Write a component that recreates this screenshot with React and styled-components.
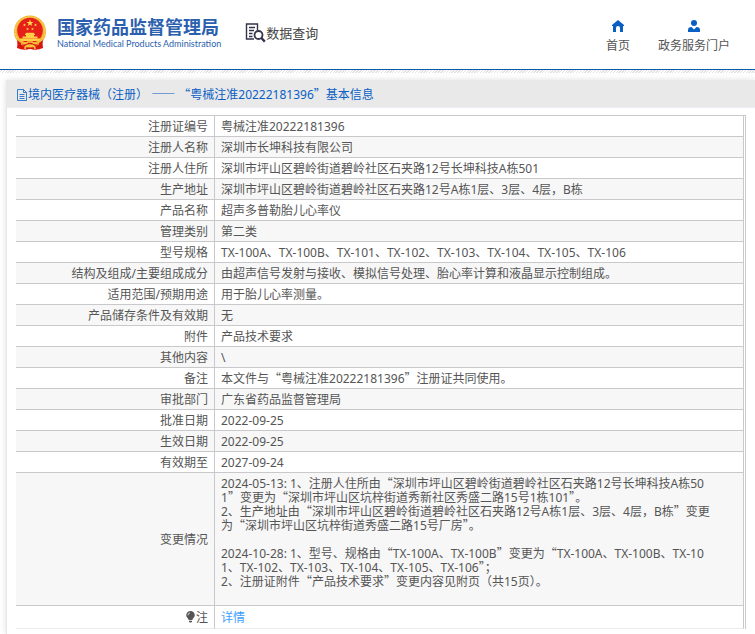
import styled, { createGlobalStyle } from 'styled-components'

const GlobalStyle = createGlobalStyle`
  * {
    box-sizing: border-box;
  }

  body {
    margin: 0;
    background: #fff;
    color: #555;
    font-family: 'Noto Sans', 'Noto Sans CJK SC', sans-serif;
    font-size: 12px;
    line-height: 14px;
  }
`

const Header = styled.header`
  display: flex;
  align-items: center;
  height: 70px;
  padding: 0 25px 4px 13px;
  border-bottom: 1px solid #0a5bab;
`

const Hatch = styled.div`
  height: 3px;
  margin-bottom: 7px;
  background: repeating-linear-gradient(135deg, #fff 0 1px, #e2e2e2 1px 2px);
`

const Logo = styled.a`
  display: flex;
  align-items: center;
  gap: 10px;
  color: #2c5fae;
  text-decoration: none;
`

const LogoText = styled.span`
  display: flex;
  flex-direction: column;
  white-space: nowrap;
`

const LogoName = styled.strong`
  font-family: 'Noto Sans CJK SC', sans-serif;
  font-size: 18px;
  font-weight: 700;
  line-height: 22px;
`

const LogoEnglish = styled.span`
  font-family: Lato, sans-serif;
  font-size: 9px;
  line-height: 14px;
`

const Search = styled.a`
  display: flex;
  align-items: center;
  margin-left: 24px;
  color: #444;
  font-size: 13px;
  line-height: 20px;
  text-decoration: none;
`

const Nav = styled.nav`
  display: flex;
  gap: 28px;
  margin-left: auto;
`

const NavLink = styled.a`
  display: flex;
  flex-direction: column;
  align-items: center;
  gap: 7px;
  padding-top: 8px;
  color: #555;
  text-decoration: none;

  svg {
    fill: #0a5fc4;
  }
`

const Panel = styled.main`
  margin-left: 6px;
  padding-bottom: 5px;
  border-left: 1px solid #e8e8e8;
  box-shadow: 0 0 6px #ddd;
`

const PanelTitle = styled.h1`
  display: flex;
  align-items: center;
  height: 28px;
  margin: 0 0 7px -1px;
  padding: 2px 0 0 11px;
  border-bottom: 1px solid #ededf5;
  background: #e9e9e9;
  color: #0a5fc4;
  font-size: 12px;
  font-weight: 400;
`

const TableArea = styled.div`
  padding: 0 9px;
`

const Table = styled.table`
  width: 100%;
  padding-right: 1px;
  border-top: 1px solid #c9c9cb;
  border-right: 1px solid #c9c9cf;
  border-spacing: 0;
`

const Row = styled.tr`
  height: ${({ $tall }) => ($tall ? '23px' : '21px')};
  background: ${({ $striped }) => ($striped ? '#f7f7f7' : '#fff')};
`

const Label = styled.th`
  width: 199px;
  padding: 4px 6px 2px;
  border-right: 1px solid #c9c9cb;
  border-bottom: 1px solid ${({ $last }) => ($last ? '#ebebf0' : '#c9c9cb')};
  font-weight: 400;
  text-align: right;

  svg {
    vertical-align: -1px;
  }
`

const Value = styled.td`
  padding: 4px 6px 2px;
  border-right: 1px solid #c9c9cb;
  border-bottom: 1px solid ${({ $last }) => ($last ? '#ebebf0' : '#c9c9cb')};
  white-space: pre-line;
`

const DetailLink = styled.a`
  color: #409eff;
  text-decoration: none;
`

const Quote = styled.span`
  font-family: 'Noto Sans CJK SC', sans-serif;
  line-height: 0;
`

// Chinese quotation marks take a full character width
function Text({ children }) {
  return children
    .split(/([“”—]+)/)
    .map((part, i) => (i % 2 ? <Quote key={i}>{part}</Quote> : part))
}

const changes = `2024-05-13: 1、注册人住所由“深圳市坪山区碧岭街道碧岭社区石夹路12号长坤科技A栋50
1”变更为“深圳市坪山区坑梓街道秀新社区秀盛二路15号1栋101”。
2、生产地址由“深圳市坪山区碧岭街道碧岭社区石夹路12号A栋1层、3层、4层，B栋”变更
为“深圳市坪山区坑梓街道秀盛二路15号厂房”。

2024-10-28: 1、型号、规格由“TX-100A、TX-100B”变更为“TX-100A、TX-100B、TX-10
1、TX-102、TX-103、TX-104、TX-105、TX-106”；
2、注册证附件“产品技术要求”变更内容见附页（共15页）。
\u00a0`

const rows = [
  ['注册证编号', '粤械注准20222181396'],
  ['注册人名称', '深圳市长坤科技有限公司'],
  ['注册人住所', '深圳市坪山区碧岭街道碧岭社区石夹路12号长坤科技A栋501'],
  ['生产地址', '深圳市坪山区碧岭街道碧岭社区石夹路12号A栋1层、3层、4层，B栋'],
  ['产品名称', '超声多普勒胎儿心率仪'],
  ['管理类别', '第二类'],
  ['型号规格', 'TX-100A、TX-100B、TX-101、TX-102、TX-103、TX-104、TX-105、TX-106'],
  ['结构及组成/主要组成成分', '由超声信号发射与接收、模拟信号处理、胎心率计算和液晶显示控制组成。'],
  ['适用范围/预期用途', '用于胎儿心率测量。'],
  ['产品储存条件及有效期', '无'],
  ['附件', '产品技术要求'],
  ['其他内容', '\\'],
  ['备注', '本文件与“粤械注准20222181396”注册证共同使用。'],
  ['审批部门', '广东省药品监督管理局'],
  ['批准日期', '2022-09-25'],
  ['生效日期', '2022-09-25'],
  ['有效期至', '2027-09-24'],
  ['变更情况', changes],
]

function Emblem() {
  return (
    <svg width="34" height="36" viewBox="0 0 34 36" aria-hidden="true">
      <path d="M5 24 L4 33 Q10 36 17 34 Q24 36 30 33 L29 24Z" fill="#d9150f" />
      <circle cx="17" cy="16.5" r="16" fill="#f2b632" />
      <circle cx="17" cy="16.5" r="14.6" fill="none" stroke="#fbd965" strokeWidth="1" strokeDasharray="2 1" />
      <circle cx="17" cy="15.5" r="12.8" fill="#e71f19" />
      <path d="M17 4.6l.9 2.3 2.5.1-2 1.5.7 2.4-2.1-1.4-2.1 1.4.7-2.4-2-1.5 2.5-.1z" fill="#ffdc4e" />
      <g fill="#ffcf45">
        <path d="M11.5 8.5l.5 1 1 .1-.8.7.3 1-1-.5-1 .5.3-1-.8-.7 1-.1z" />
        <path d="M22.5 8.5l.5 1 1 .1-.8.7.3 1-1-.5-1 .5.3-1-.8-.7 1-.1z" />
        <path d="M14.5 12.5l.4.9 1 .1-.7.7.2 1-.9-.5-.9.5.2-1-.7-.7 1-.1z" />
        <path d="M19.5 12.5l.4.9 1 .1-.7.7.2 1-.9-.5-.9.5.2-1-.7-.7 1-.1z" />
        <path d="M12 19l1.5-1.3h7L22 19v1h-1v1.5h3.5v2h-15v-2H13V20h-1z" />
        <path d="M6.5 23.5h21L26 26H8z" />
      </g>
      <path d="M4 25q5 5 10 3l3-2 3 2q5 2 10-3l-1 5-7 1-5-1-5 1-7-1z" fill="#d9150f" />
      <path d="M8 29q5 0 7-2h4q2 2 7 2M12 34q0-4 5-4t5 4" fill="none" stroke="#f9c83d" strokeWidth="1.6" />
    </svg>
  )
}

function SearchIcon() {
  return (
    <svg width="21" height="20" viewBox="0 0 21 20" fill="none" stroke="#33334a" aria-hidden="true">
      <path d="M9 16H1.5V1H12.5V7M4 4.5h6M4 7.5h5M4 10.5h3.5M4 13.5h3.5" strokeWidth="1.4" />
      <circle cx="13.5" cy="12" r="4" strokeWidth="1.8" />
      <path d="M16.4 15l3.4 3.6" strokeWidth="2.4" />
    </svg>
  )
}

function HomeIcon() {
  return (
    <svg width="12" height="12" viewBox="0 0 12 12" aria-hidden="true">
      <path d="M6 0L0 5v1h1v6h3V8a2 2 0 0 1 4 0v4h3V6h1V5z" />
    </svg>
  )
}

function UserIcon() {
  return (
    <svg width="12" height="12" viewBox="0 0 12 12" aria-hidden="true">
      <circle cx="6" cy="3" r="3" />
      <path d="M0 12V10Q0 7 3.5 7L6 9.5 8.5 7Q12 7 12 10v2z" />
    </svg>
  )
}

function DocumentIcon() {
  return (
    <svg width="11" height="12" viewBox="0 0 11 12" fill="none" stroke="#0a5fc4" aria-hidden="true">
      <path d="M.5 .5h6l3 3v8h-9zM6.5 .5v3h3M2.5 5.5h5M2.5 7.5h5M2.5 9.5h5" strokeWidth=".8" />
    </svg>
  )
}

function BulbIcon() {
  return (
    <svg width="11" height="12" viewBox="0 0 10 12" fill="#555" aria-hidden="true">
      <path d="M5 0a4.3 4.3 0 0 1 4.3 4.3C9.3 6.5 7 7.5 6.8 9H3.2C3 7.5 .7 6.5 .7 4.3A4.3 4.3 0 0 1 5 0z" />
      <path d="M3.5 9.8h3v.8L5.8 11.5H4.2l-.7-.9z" />
      <path d="M2.4 4.3Q2.5 2.3 4.5 1.8" fill="none" stroke="#fff" strokeWidth=".8" />
    </svg>
  )
}

export default function App() {
  return (
    <div lang="zh-CN">
      <GlobalStyle />
      <Header>
        <Logo href="#">
          <Emblem />
          <LogoText>
            <LogoName>国家药品监督管理局</LogoName>
            <LogoEnglish>National Medical Products Administration</LogoEnglish>
          </LogoText>
        </Logo>
        <Search href="#search">
          <SearchIcon />
          数据查询
        </Search>
        <Nav>
          <NavLink href="#home">
            <HomeIcon />
            首页
          </NavLink>
          <NavLink href="#portal">
            <UserIcon />
            政务服务门户
          </NavLink>
        </Nav>
      </Header>
      <Hatch />
      <Panel>
        <PanelTitle>
          <DocumentIcon />
          <span>
            <Text>境内医疗器械（注册） —— “粤械注准20222181396”基本信息</Text>
          </span>
        </PanelTitle>
        <TableArea>
          <Table>
            <tbody>
              {rows.map(([label, value], i) => (
                <Row key={label} $striped={i % 2 === 1}>
                  <Label scope="row">{label}</Label>
                  <Value>
                    <Text>{value}</Text>
                  </Value>
                </Row>
              ))}
              <Row $tall>
                <Label scope="row" $last>
                  <BulbIcon />注
                </Label>
                <Value $last>
                  <DetailLink href="#detail">详情</DetailLink>
                </Value>
              </Row>
            </tbody>
          </Table>
        </TableArea>
      </Panel>
    </div>
  )
}
